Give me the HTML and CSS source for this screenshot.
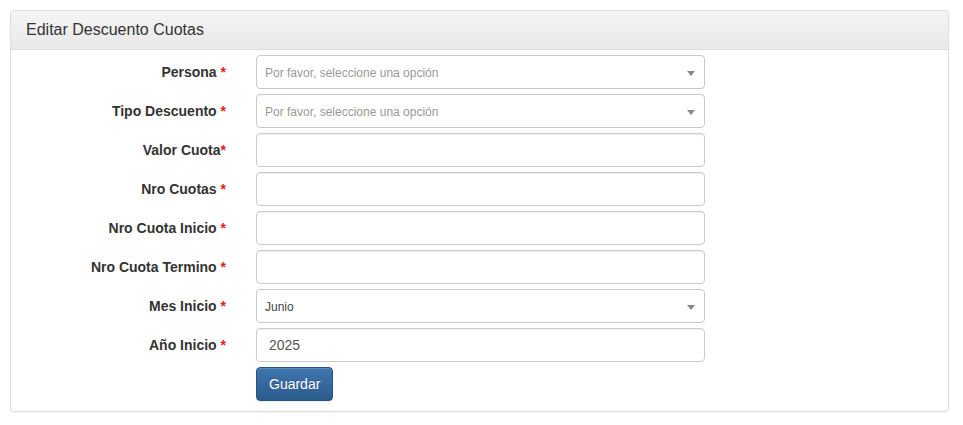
FILE: index.html
```html
<!DOCTYPE html>
<html lang="es">
<head>
<meta charset="utf-8">
<title>Editar Descuento Cuotas</title>
<link rel="stylesheet" href="styles.css">
</head>
<body>
<div class="panel">
  <div class="panel-heading">Editar Descuento Cuotas</div>
  <form class="panel-body">
    <label class="control-label">Persona <span class="req">*</span></label>
    <div class="select"><span class="placeholder">Por favor, seleccione una opción</span><b class="arrow"></b></div>

    <label class="control-label">Tipo Descuento <span class="req">*</span></label>
    <div class="select"><span class="placeholder">Por favor, seleccione una opción</span><b class="arrow"></b></div>

    <label class="control-label">Valor Cuota<span class="req">*</span></label>
    <input class="form-control" type="text">

    <label class="control-label">Nro Cuotas <span class="req">*</span></label>
    <input class="form-control" type="text">

    <label class="control-label">Nro Cuota Inicio <span class="req">*</span></label>
    <input class="form-control" type="text">

    <label class="control-label">Nro Cuota Termino <span class="req">*</span></label>
    <input class="form-control" type="text">

    <label class="control-label">Mes Inicio <span class="req">*</span></label>
    <div class="select"><span class="value">Junio</span><b class="arrow"></b></div>

    <label class="control-label">Año Inicio <span class="req">*</span></label>
    <input class="form-control" type="text" value="2025">

    <div class="spacer"></div>
    <div class="actions"><button type="button" class="btn-primary">Guardar</button></div>
  </form>
</div>
</body>
</html>
```
FILE: styles.css
```css
* { box-sizing: border-box; }
html, body { margin: 0; padding: 0; background: #fff; }
body {
  padding: 10px;
  font-family: "Liberation Sans", Arial, Helvetica, sans-serif;
  font-size: 14px;
  color: #333;
}
.panel {
  width: 939px;
  border: 1px solid #ddd;
  border-radius: 4px;
  background: #fff;
  box-shadow: 0 1px 2px rgba(0,0,0,.05);
}
.panel-heading {
  height: 39px;
  padding: 0 15px;
  display: flex;
  align-items: center;
  font-size: 16px;
  color: #333;
  background-image: linear-gradient(to bottom, #f5f5f5 0, #e8e8e8 100%);
  border-bottom: 1px solid #ddd;
  border-radius: 3px 3px 0 0;
}
.panel-body {
  margin: 0;
  padding: 5px 0 10px 0;
  display: grid;
  grid-template-columns: 215px 449px;
  column-gap: 30px;
  row-gap: 5px;
}
.control-label {
  display: flex;
  align-items: center;
  justify-content: flex-end;
  height: 34px;
  font-weight: bold;
  color: #333;
  white-space: pre;
}
.req { color: #e02020; font-weight: bold; }
.form-control, .select {
  height: 34px;
  border: 1px solid #ccc;
  border-radius: 4px;
  background: #fff;
  box-shadow: inset 0 1px 1px rgba(0,0,0,.075);
}
.form-control {
  width: 449px;
  padding: 6px 12px;
  font-family: inherit;
  font-size: 14px;
  color: #555;
  outline: none;
}
.select {
  position: relative;
  display: flex;
  align-items: center;
  padding: 2px 24px 0 8px;
  font-size: 12px;
  box-shadow: none;
  border-color: #c8c8c8;
}
.placeholder { color: #999; }
.value { color: #444; }
.arrow {
  position: absolute;
  right: 9px;
  top: 15px;
  width: 0;
  height: 0;
  border-style: solid;
  border-width: 5px 4px 0 4px;
  border-color: #888 transparent transparent transparent;
}
.actions { display: flex; }
.btn-primary {
  height: 34px;
  padding: 6px 12px;
  font-family: inherit;
  font-size: 14px;
  color: #fff;
  background-image: linear-gradient(to bottom, #3f76b0 0, #2b5b8c 100%);
  border: 1px solid #245580;
  border-radius: 4px;
  text-shadow: 0 -1px 0 rgba(0,0,0,.2);
  box-shadow: inset 0 1px 0 rgba(255,255,255,.15), 0 1px 1px rgba(0,0,0,.075);
  cursor: pointer;
}
```
